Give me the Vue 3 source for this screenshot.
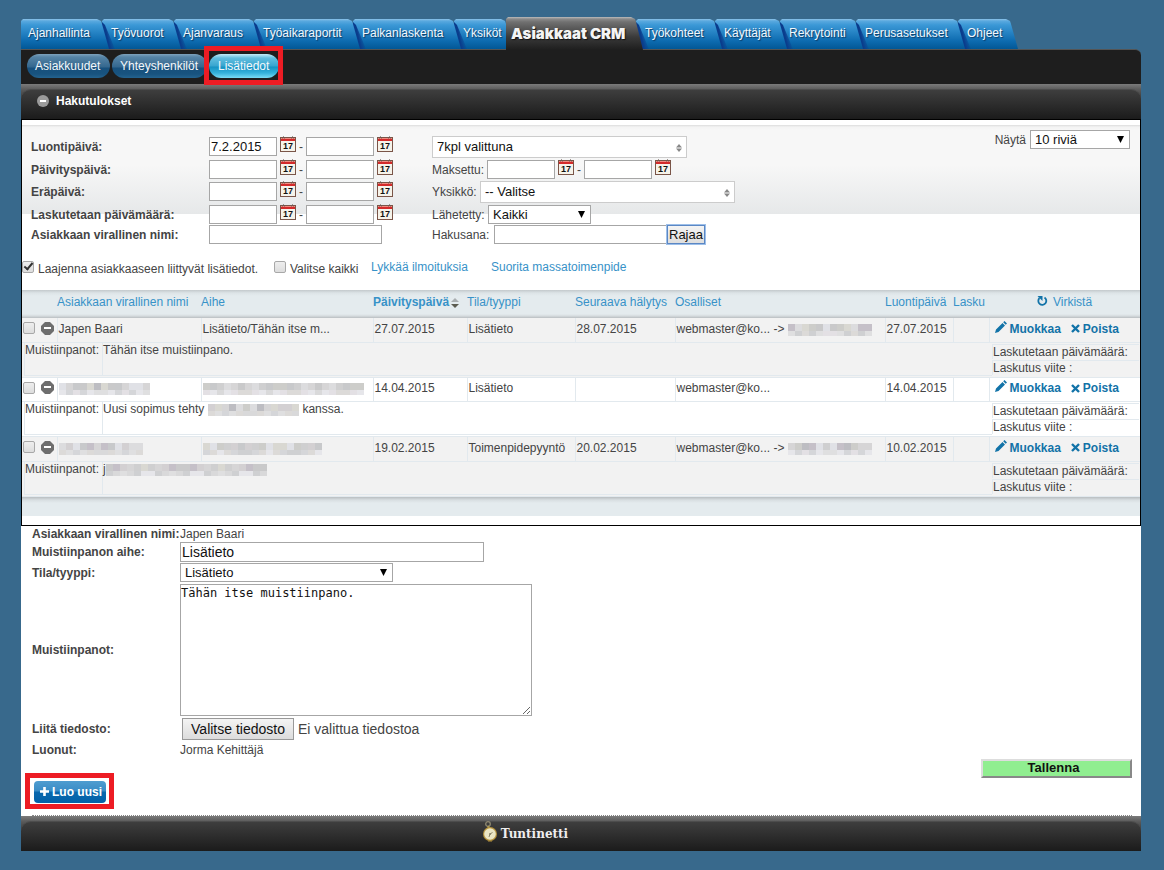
<script setup>
import { ref } from 'vue'

const tabs = [
  'Ajanhallinta', 'Työvuorot', 'Ajanvaraus', 'Työaikaraportit', 'Palkanlaskenta', 'Yksiköt',
  'Asiakkaat CRM', 'Työkohteet', 'Käyttäjät', 'Rekrytointi', 'Perusasetukset', 'Ohjeet',
]
const activeTab = 'Asiakkaat CRM'

const dateFields = [
  { id: 'luonti', label: 'Luontipäivä:', from: '7.2.2015' },
  { id: 'paivitys', label: 'Päivityspäivä:', from: '' },
  { id: 'era', label: 'Eräpäivä:', from: '' },
  { id: 'laskutus', label: 'Laskutetaan päivämäärä:', from: '' },
]

const rows = [
  {
    id: 1, name: 'Japen Baari', subject: 'Lisätieto/Tähän itse m...', updated: '27.07.2015', type: 'Lisätieto',
    alarm: '28.07.2015', people: 'webmaster@ko... ->', peopleMask: 12, created: '27.07.2015',
    note: 'Tähän itse muistiinpano.',
  },
  {
    id: 2, nameMask: 13, subjectMask: 23, updated: '14.04.2015', type: 'Lisätieto',
    alarm: '', people: 'webmaster@ko...', created: '14.04.2015',
    note: 'Uusi sopimus tehty', noteMask: 13, noteEnd: 'kanssa.',
  },
  {
    id: 3, nameMask: 12, subjectMask: 17, updated: '19.02.2015', type: 'Toimenpidepyyntö',
    alarm: '20.02.2015', people: 'webmaster@ko... ->', peopleMask: 12, created: '10.02.2015',
    note: 'j', noteMask: 23,
  },
]

const shades = ['#c9c9ca', '#d6d5d6', '#c5c0c8', '#cdcdca', '#dcdcde', '#c8c9cb', '#d3d0d2', '#bdbdc2', '#d9d8d2', '#cfcfd0', '#e0e1e6']
const faint = ['#dfdfe0', '#d9d9da', '#e6e6ea', '#dcdad8', '#cfd0d2', '#e3e0e4', '#d5d6d9']

function cells(count, seed) {
  const out = []
  for (let i = 0; i < count; i++) {
    out.push({ x: i * 7, y: 0, h: 7, fill: shades[(i * i + seed * 5 + i) % shades.length] })
    out.push({ x: i * 7, y: 7, h: 5, fill: faint[(i * 3 + i * i + seed) % faint.length] })
  }
  return out
}

const expand = ref(true)
const selectAll = ref(false)
const fileInput = ref(null)
</script>

<template>
  <div class="page">
    <nav class="tabs">
      <a v-for="t in tabs" :key="t" href="#" class="tab" :class="{ active: t === activeTab }"><span>{{ t }}</span></a>
    </nav>

    <nav class="subnav">
      <a href="#" class="pill">Asiakkuudet</a>
      <a href="#" class="pill">Yhteyshenkilöt</a>
      <a href="#" class="pill current">Lisätiedot</a>
    </nav>

    <header class="bar section-head">
      <div class="bar-inner">
        <svg width="12" height="12" viewBox="0 0 12 12"><circle cx="6" cy="6" r="6" fill="#9b9b9b" /><rect x="3" y="5" width="6" height="2" fill="#fff" /></svg>
        <h1>Hakutulokset</h1>
      </div>
    </header>

    <section class="results">
      <form class="filters" @submit.prevent>
        <div class="grid left">
          <template v-for="f in dateFields" :key="f.id">
            <label :for="f.id">{{ f.label }}</label>
            <div class="range">
              <input :id="f.id" type="text" class="date" :value="f.from">
              <svg class="cal" width="16" height="16" viewBox="0 0 16 16"><rect x=".5" y="1.500" width="15" height="14" fill="#f6f3ea" stroke="#7a5548" /><rect x="1" y="2" width="14" height="3" fill="#d42a2a" /><rect x="1" y="2" width="14" height="1" fill="#f08a80" /><path d="M2.500 2.500V1.500Q3.500 0 4.500 1.500V2.500M11.500 2.500V1.500Q12.500 0 13.500 1.500V2.500" fill="none" stroke="#6b5a55" /><text x="8" y="13" text-anchor="middle">17</text></svg>
              <span>-</span>
              <input type="text" class="date" :aria-label="f.label + ' loppu'">
              <svg class="cal" width="16" height="16" viewBox="0 0 16 16"><rect x=".5" y="1.500" width="15" height="14" fill="#f6f3ea" stroke="#7a5548" /><rect x="1" y="2" width="14" height="3" fill="#d42a2a" /><rect x="1" y="2" width="14" height="1" fill="#f08a80" /><path d="M2.500 2.500V1.500Q3.500 0 4.500 1.500V2.500M11.500 2.500V1.500Q12.500 0 13.500 1.500V2.500" fill="none" stroke="#6b5a55" /><text x="8" y="13" text-anchor="middle">17</text></svg>
            </div>
          </template>
          <label for="nimi">Asiakkaan virallinen nimi:</label>
          <input id="nimi" type="text" class="long">
        </div>

        <div class="grid right">
          <div class="field">
            <span class="select wide">
              <select aria-label="Tilat"><option>7kpl valittuna</option></select>
              <svg width="6" height="8" viewBox="0 0 6 8"><path d="M0 3.500 3 0 6 3.500zM0 4.500 3 8 6 4.500z" fill="#888" /></svg>
            </span>
          </div>
          <div class="field">
            <label for="maksettu">Maksettu:</label>
            <div class="range">
              <input id="maksettu" type="text" class="date">
              <svg class="cal" width="16" height="16" viewBox="0 0 16 16"><rect x=".5" y="1.500" width="15" height="14" fill="#f6f3ea" stroke="#7a5548" /><rect x="1" y="2" width="14" height="3" fill="#d42a2a" /><rect x="1" y="2" width="14" height="1" fill="#f08a80" /><path d="M2.500 2.500V1.500Q3.500 0 4.500 1.500V2.500M11.500 2.500V1.500Q12.500 0 13.500 1.500V2.500" fill="none" stroke="#6b5a55" /><text x="8" y="13" text-anchor="middle">17</text></svg>
              <span>-</span>
              <input type="text" class="date" aria-label="Maksettu loppu">
              <svg class="cal" width="16" height="16" viewBox="0 0 16 16"><rect x=".5" y="1.500" width="15" height="14" fill="#f6f3ea" stroke="#7a5548" /><rect x="1" y="2" width="14" height="3" fill="#d42a2a" /><rect x="1" y="2" width="14" height="1" fill="#f08a80" /><path d="M2.500 2.500V1.500Q3.500 0 4.500 1.500V2.500M11.500 2.500V1.500Q12.500 0 13.500 1.500V2.500" fill="none" stroke="#6b5a55" /><text x="8" y="13" text-anchor="middle">17</text></svg>
            </div>
          </div>
          <div class="field">
            <label for="yksikko" class="l48">Yksikkö:</label>
            <span class="select wide">
              <select id="yksikko"><option>-- Valitse</option></select>
              <svg width="6" height="8" viewBox="0 0 6 8"><path d="M0 3.500 3 0 6 3.500zM0 4.500 3 8 6 4.500z" fill="#888" /></svg>
            </span>
          </div>
          <div class="field">
            <label for="lahetetty" class="l56">Lähetetty:</label>
            <span class="select small">
              <select id="lahetetty"><option>Kaikki</option></select>
              <svg width="8" height="8" viewBox="0 0 8 8"><path d="M0 0H7L3.500 7z" fill="#000" /></svg>
            </span>
          </div>
          <div class="field">
            <label for="haku" class="l62">Hakusana:</label>
            <input id="haku" type="text" class="long">
            <button type="submit" class="limit">Rajaa</button>
          </div>
        </div>

        <div class="rows-pick">
          <label for="rivit">Näytä</label>
          <span class="select count">
            <select id="rivit"><option>10 riviä</option></select>
            <svg width="8" height="8" viewBox="0 0 8 8"><path d="M0 0H7L3.500 7z" fill="#000" /></svg>
          </span>
        </div>
      </form>

      <div class="options">
        <label class="opt"><input v-model="expand" type="checkbox"><span>Laajenna asiakkaaseen liittyvät lisätiedot.</span></label>
        <label class="opt all"><input v-model="selectAll" type="checkbox"><span>Valitse kaikki</span></label>
        <a href="#">Lykkää ilmoituksia</a>
        <a href="#">Suorita massatoimenpide</a>
      </div>

      <table class="list">
        <colgroup>
          <col class="c-tick"><col class="c-name"><col class="c-subject"><col class="c-updated"><col class="c-type">
          <col class="c-alarm"><col class="c-people"><col class="c-created"><col class="c-bill"><col class="c-act">
        </colgroup>
        <thead>
          <tr>
            <th></th>
            <th><a href="#">Asiakkaan virallinen nimi</a></th>
            <th><a href="#">Aihe</a></th>
            <th><a href="#" class="sorted">Päivityspäivä<svg width="8" height="10" viewBox="0 0 8 10"><path d="M0 4 4 0 8 4z" fill="#a9aeb0" /><path d="M0 6 4 10 8 6z" fill="#5c5c50" /></svg></a></th>
            <th><a href="#">Tila/tyyppi</a></th>
            <th><a href="#">Seuraava hälytys</a></th>
            <th><a href="#">Osalliset</a></th>
            <th><a href="#">Luontipäivä</a></th>
            <th><a href="#">Lasku</a></th>
            <th class="refresh"><a href="#"><svg width="12" height="12" viewBox="0 0 12 12"><path d="M3.500 3A4 4 0 1 0 8.500 2.500" fill="none" stroke="#1273a8" stroke-width="1.800" /><path d="M1.500 1H6.500V6z" fill="#1273a8" /></svg>Virkistä</a></th>
          </tr>
        </thead>
        <tbody v-for="r in rows" :key="r.id">
          <tr class="main">
            <td class="tick">
              <div>
                <input type="checkbox" :aria-label="'Valitse rivi ' + r.id">
                <button type="button" aria-label="Sulje"><svg width="13" height="13" viewBox="0 0 13 13"><path d="M4 0H9L13 4V9L9 13H4L0 9V4z" fill="#6e6e6e" /><rect x="3" y="5" width="7" height="2" fill="#fff" /></svg></button>
              </div>
            </td>
            <td><svg v-if="r.nameMask" class="mask" :width="r.nameMask * 7" height="12"><rect v-for="(c, i) in cells(r.nameMask, r.id)" :key="i" :x="c.x" :y="c.y" width="7" :height="c.h" :fill="c.fill" /></svg>{{ r.name }}</td>
            <td><svg v-if="r.subjectMask" class="mask" :width="r.subjectMask * 7" height="12"><rect v-for="(c, i) in cells(r.subjectMask, r.id + 3)" :key="i" :x="c.x" :y="c.y" width="7" :height="c.h" :fill="c.fill" /></svg>{{ r.subject }}</td>
            <td>{{ r.updated }}</td>
            <td>{{ r.type }}</td>
            <td>{{ r.alarm }}</td>
            <td>{{ r.people }} <svg v-if="r.peopleMask" class="mask" :width="r.peopleMask * 7" height="12"><rect v-for="(c, i) in cells(r.peopleMask, r.id + 6)" :key="i" :x="c.x" :y="c.y" width="7" :height="c.h" :fill="c.fill" /></svg></td>
            <td>{{ r.created }}</td>
            <td></td>
            <td>
              <div class="actions">
                <a href="#"><svg class="pencil" width="12" height="12" viewBox="0 0 12 12"><path d="M0 12 1 8.500 7.500 2 10 4.500 3.500 11zM8.200 1.300 9.500 0 12 2.500 10.700 3.800z" fill="#1273a8" /></svg>Muokkaa</a>
                <a href="#"><svg width="9" height="9" viewBox="0 0 9 9"><path d="M1 1 8 8M8 1 1 8" stroke="#1273a8" stroke-width="2.400" /></svg>Poista</a>
              </div>
            </td>
          </tr>
          <tr class="detail">
            <td colspan="10">
              <div class="detail-box">
                <div class="cap">Muistiinpanot:</div>
                <div class="note"><span>{{ r.note }}</span><svg v-if="r.noteMask" class="mask" :class="{ spaced: r.noteEnd }" :width="r.noteMask * 7" height="12"><rect v-for="(c, i) in cells(r.noteMask, r.id + 8)" :key="i" :x="c.x" :y="c.y" width="7" :height="c.h" :fill="c.fill" /></svg><span v-if="r.noteEnd">{{ r.noteEnd }}</span></div>
                <div class="billing">
                  <div>Laskutetaan päivämäärä:</div>
                  <div>Laskutus viite :</div>
                </div>
              </div>
            </td>
          </tr>
        </tbody>
      </table>
      <div class="list-foot"></div>
    </section>

    <form class="editor" @submit.prevent>
      <div class="edit-grid">
        <span class="lab">Asiakkaan virallinen nimi:</span>
        <span>Japen Baari</span>
        <label for="aihe">Muistiinpanon aihe:</label>
        <input id="aihe" type="text" class="subject" value="Lisätieto">
        <label for="tila">Tila/tyyppi:</label>
        <span class="select type">
          <select id="tila"><option>Lisätieto</option></select>
          <svg width="8" height="8" viewBox="0 0 8 8"><path d="M0 0H7L3.500 7z" fill="#000" /></svg>
        </span>
        <label for="muistio">Muistiinpanot:</label>
        <textarea id="muistio" spellcheck="false">Tähän itse muistiinpano.</textarea>
        <label for="tiedosto">Liitä tiedosto:</label>
        <div class="file">
          <input id="tiedosto" ref="fileInput" type="file" hidden>
          <button type="button" @click="fileInput.click()">Valitse tiedosto</button>
          <span>Ei valittua tiedostoa</span>
        </div>
        <span class="lab">Luonut:</span>
        <span>Jorma Kehittäjä</span>
      </div>
      <div class="save-row"><button type="submit" class="save">Tallenna</button></div>
      <div class="new-row">
        <button type="button" class="new"><svg width="9" height="9" viewBox="0 0 9 9"><path d="M4.500 0V9M0 4.500H9" stroke="#fff" stroke-width="2.600" /></svg>Luo uusi</button>
      </div>
    </form>

    <footer class="bar">
      <div class="bar-inner brand">
        <svg width="16" height="21" viewBox="0 0 16 21"><circle cx="6" cy="3" r="2.300" fill="none" stroke="#8d8770" stroke-width="1.300" /><path d="M6 5 7 7" stroke="#b09a50" stroke-width="2" /><circle cx="8" cy="13" r="7" fill="#b5923c" /><circle cx="8" cy="13" r="5.800" fill="#ebe6c4" /><path d="M8 13 10.500 11.500M8 13 7 16" stroke="#8b8468" /><circle cx="8" cy="13" r="1" fill="#8b8468" /><path d="M6 20H10" stroke="#b5923c" /></svg>
        <span>Tuntinetti</span>
      </div>
    </footer>
  </div>
</template>

<style>
body {
  margin: 0;
  background: #38698c;
}
</style>

<style scoped>
.page {
  padding: 17px 23px 20px 21px;
  font: 12px/14px "Liberation Sans", Arial, sans-serif;
  color: #444;
}
.page *, .page *::before, .page *::after { box-sizing: border-box; }
a { color: #3792c8; text-decoration: none; }
input, select, button, textarea { font-family: inherit; margin: 0; }

.tabs {
  display: grid;
  grid-template-columns: 81px 72px 80px 99px 101px 52px 130px 79px 65px 76px 102px 53px;
  align-items: end;
  position: relative;
  height: 32px;
}
.tab {
  position: relative;
  height: 30px;
  margin-right: -7px;
  padding: 7px 0 0 9px;
  white-space: nowrap;
  color: #f2f8fd;
  text-shadow: 1px 1px 1px #0c3c66;
  background: linear-gradient(#8cc2e8, #5aa9df 2px, #3b98d6 6px, #0d6bb0 22px, #025796);
  clip-path: polygon(0 2px, 2px 0, calc(100% - 12px) 0, calc(100% - 8px) 2px, calc(100% - 7px) 5px, 100% 100%, 0 100%);
}
.tab:first-child { padding-left: 7px; }
.tab:not(:first-child):not(.active)::before {
  content: "";
  position: absolute;
  inset: 0 auto 0 0;
  width: 13px;
  background: linear-gradient(78deg, #0a3c8c 40%, #0a4ea400 72%);
  clip-path: polygon(0 3px, 3px 6px, 100% 100%, 0 100%);
}
.tab span { position: relative; }
.tab:nth-child(1) { z-index: 12; }
.tab:nth-child(2) { z-index: 11; }
.tab:nth-child(3) { z-index: 10; }
.tab:nth-child(4) { z-index: 9; }
.tab:nth-child(5) { z-index: 8; }
.tab:nth-child(6) { z-index: 7; }
.tab:nth-child(8) { z-index: 6; }
.tab:nth-child(9) { z-index: 5; }
.tab:nth-child(10) { z-index: 4; }
.tab:nth-child(11) { z-index: 3; }
.tab:nth-child(12) { z-index: 2; }
.tab.active {
  z-index: 13;
  height: 33px;
  margin-bottom: -1px;
  padding: 9px 0 0 5px;
  font: 900 15px/16px "Arial Black", Inter, sans-serif;
  color: #f4f4f4;
  text-shadow: 1px 1px 1px #111;
  background: linear-gradient(#bdbdbd, #8a8a8a 2px, #707070 5px, #3a3a3a 20px, #1e1e1e);
}

.subnav {
  position: relative;
  display: flex;
  gap: 2px;
  height: 35px;
  padding: 4px 6px 0;
  background: #1e1e1e;
  border-top: 1px solid #555;
  border-top-right-radius: 6px;
}
.pill {
  height: 24px;
  width: 83px;
  padding: 5px 0 0 8px;
  border-radius: 12px;
  color: #f4f8fb;
  background: linear-gradient(#7ea2bc, #5684a6 3px, #34678e 13px, #17507d 14px, #18537f 20px, #24638f);
}
.pill:nth-child(2) { width: 95px; }
.pill.current {
  position: relative;
  z-index: 20;
  width: 70px;
  padding-left: 9px;
  background: linear-gradient(#c6ecf8, #62bedf 4px, #37a5cf 12px, #1692c2 13px, #35b2db 19px, #7adcf5);
}
.pill.current::after {
  content: "";
  position: absolute;
  inset: -8px -4px -7px -5px;
  border: 5px solid #ed1c24;
}

.bar {
  background: linear-gradient(#7b7b7b, #585858 6px, #444 12px, #333);
}
.bar-inner {
  display: flex;
  align-items: center;
}
.section-head { padding-top: 5px; border-bottom: 1px solid #000; }
.section-head .bar-inner {
  gap: 7px;
  height: 30px;
  padding: 0 16px 8px;
  border-top: 1px solid #4d4d4d;
  border-radius: 10px 10px 0 0;
  background: linear-gradient(#3e3e3e, #1b1b1b);
}
h1 { margin: 0; font-size: 12px; line-height: 14px; color: #fff; }

.results {
  background: #fff;
  border: 1px solid #000;
  border-top: 0;
  padding: 5px 0 9px;
}
.filters {
  display: flex;
  align-items: flex-start;
  padding: 5px 10px 0 9px;
  background: linear-gradient(#dcdcdc, #f3f3f3 2px, #f7f7f7 5px, #f7f7f7 40px, #e6e8e9) no-repeat 0 0 / 100% 89px;
}
.grid {
  display: grid;
  grid-template-rows: 23px 22px 23px 20px 20px;
  padding-top: 7px;
}
.left { grid-template-columns: 178px 223px; }
.left label { font-weight: bold; padding-top: 3px; }
.right { padding-top: 6px; }
input[type="text"] {
  height: 19px;
  padding: 0 1px;
  border: 1px solid #a6a6a6;
  background: #fff;
  font-size: 13px;
  color: #111;
}
.range { display: flex; }
.date { width: 68px; }
.cal { margin: -1px 3px 0; }
.cal text { font: bold 9px "Liberation Sans", sans-serif; fill: #111; }
.range span { width: 7px; padding-top: 3px; }
.long { width: 173px; }
.field { display: flex; align-items: flex-start; }
.field > label { width: 55px; padding-top: 4px; white-space: nowrap; }
.field > .l48 { width: 48px; }
.field > .l56 { width: 56px; }
.field > .l62 { width: 62px; }
.field .range, .field > .long, .field > .small { margin-top: 1px; }
.select { position: relative; display: inline-flex; }
.select select {
  width: 100%;
  height: 19px;
  padding: 0 4px;
  appearance: none;
  border: 1px solid #a6a6a6;
  border-radius: 0;
  background: #fff;
  font-size: 13px;
  color: #111;
}
.select svg { position: absolute; top: 6px; right: 5px; pointer-events: none; }
.wide { width: 255px; }
.wide select { height: 22px; padding-bottom: 2px; border-color: #ccc; }
.wide svg { top: 8px; }
.small { width: 103px; }
.count { width: 100px; }
.type { width: 213px; }
.limit {
  height: 19px;
  margin-top: 1px;
  padding: 0 1px;
  border: 1px solid #5b87c4;
  box-shadow: 0 0 0 1px #9dbfe9;
  background: linear-gradient(#f4f4f4, #dedede);
  font-size: 13px;
  line-height: 15px;
  color: #111;
}
.rows-pick { display: flex; gap: 4px; margin-left: auto; }
.rows-pick label { padding-top: 3px; }

.options { display: flex; padding: 14px 0 14px; height: 45px; }
.opt { display: flex; gap: 4px; width: 252px; white-space: nowrap; }
.opt input { margin-top: 2px; }
.opt span { padding-top: 3px; }
.opt.all { width: 97px; }
.options a { padding-top: 1px; width: 120px; white-space: nowrap; }
.options a:last-child { width: auto; }
input[type="checkbox"] {
  appearance: none;
  width: 12px;
  height: 12px;
  border: 1px solid #a8a8a8;
  border-radius: 2px;
  background: linear-gradient(#eee, #ddd);
}
input[type="checkbox"]:checked::before {
  content: "";
  display: block;
  width: 9px;
  height: 5px;
  margin: 1px 0 0 1px;
  border: solid #333;
  border-width: 0 0 2px 2px;
  transform: rotate(-50deg);
}

.list { width: 100%; table-layout: fixed; border-collapse: collapse; }
.c-tick { width: 35px; }
.c-name { width: 144px; }
.c-subject { width: 172px; }
.c-updated { width: 94px; }
.c-type { width: 108px; }
.c-alarm { width: 100px; }
.c-people { width: 210px; }
.c-created { width: 68px; }
.c-bill { width: 36px; }
.list th {
  height: 28px;
  padding: 0 0 4px;
  font-weight: normal;
  text-align: left;
  white-space: nowrap;
}
.list thead tr { background: linear-gradient(#c3c9cc, #dde4e7 3px, #e4ebee 6px, #e4ebee 24px, #d5dbde 26px, #b9bec1); }
.sorted { font-weight: bold; }
.sorted svg { margin-left: 2px; vertical-align: -2px; }
.list .refresh { padding-left: 47px; }
.refresh a { display: flex; gap: 5px; }
.list td { padding: 0; white-space: nowrap; overflow: hidden; }
tbody:nth-of-type(odd) { background: #f2f2f2; }
.main td {
  height: 24px;
  padding: 0 0 2px 1px;
  border-bottom: 1px solid #e2e9ee;
  border-left: 1px solid #e2e9ee;
}
.main .tick { border-left: 0; padding: 0; }
.tick div { display: flex; gap: 6px; align-items: center; padding: 0 0 3px 1px; }
.tick button { display: flex; padding: 0; border: 0; background: none; }
.mask { vertical-align: -3px; }
.mask.spaced { margin: 0 3px 0 4px; }
.actions { display: flex; gap: 10px; padding-left: 4px; font-weight: bold; }
.actions a { display: flex; align-items: center; gap: 3px; color: #1273a8; }
.pencil { margin-bottom: 4px; }
.detail-box {
  display: flex;
  height: 35px;
  padding: 0 1px 1px 2px;
  border-bottom: 1px solid #e2e9ee;
}
.cap { width: 78px; }
.cap, .note { border-left: 1px solid #e2e9ee; border-bottom: 1px solid #e2e9ee; }
.note { flex: 1; }
.billing { width: 147px; }
.billing div {
  height: 15px;
  margin-top: 1px;
  border: 1px solid #e2e9ee;
  border-width: 1px 0 0 1px;
}
.list-foot { height: 19px; background: linear-gradient(#b9bec1, #d8dee1 3px, #e4ebee 6px); }

.editor { background: #fff; padding: 0 9px 0 11px; }
.edit-grid {
  display: grid;
  grid-template-columns: 148px 1fr;
  grid-template-rows: 16px 21px 20px 134px 25px 17px;
  align-items: center;
  justify-items: start;
}
.edit-grid label, .lab { font-weight: bold; white-space: nowrap; }
input.subject { width: 304px; height: 20px; font-size: 14px; }
textarea {
  width: 352px;
  height: 132px;
  padding: 1px 0;
  border: 1px solid #a6a6a6;
  font: 12px/15px "DejaVu Sans Mono", monospace;
  color: #111;
}
.file { display: flex; align-items: center; gap: 4px; padding-left: 2px; font-size: 14px; }
.file button {
  width: 112px;
  height: 22px;
  padding: 0;
  border: 1px solid #999;
  background: linear-gradient(#f4f4f4, #dcdcdc);
  font-size: 14px;
  color: #111;
}
.save-row { display: flex; justify-content: flex-end; }
.save {
  width: 151px;
  height: 19px;
  padding: 0 6px 0 0;
  border: 2px solid;
  border-color: #ddd #888 #888 #ddd;
  background: #90ee90;
  font-weight: bold;
  font-size: 13px;
  line-height: 14px;
  color: #111;
}
.new-row { padding: 3px 0 12px 2px; border-bottom: 1px dotted #888; }
.new {
  position: relative;
  display: flex;
  align-items: center;
  gap: 3px;
  width: 72px;
  height: 22px;
  padding: 0 0 0 6px;
  border: 0;
  border-radius: 4px;
  background: linear-gradient(#4f9dd0, #3a8cc6 10px, #0a68ae 11px, #0361a8);
  font-weight: bold;
  font-size: 12px;
  color: #fff;
  white-space: nowrap;
}
.new::after {
  content: "";
  position: absolute;
  inset: -8px -8px -6px -9px;
  border: 5px solid #ed1c24;
}
footer.bar { padding-top: 5px; }
.brand {
  justify-content: center;
  gap: 3px;
  height: 30px;
  padding: 0 112px 9px 0;
  border-top: 1px solid #4d4d4d;
  border-radius: 10px 10px 0 0;
  background: linear-gradient(#3e3e3e, #1b1b1b);
  font: bold 12px/16px "DejaVu Serif", serif;
  color: #eee;
}
.brand span { padding-top: 5px; }
</style>
